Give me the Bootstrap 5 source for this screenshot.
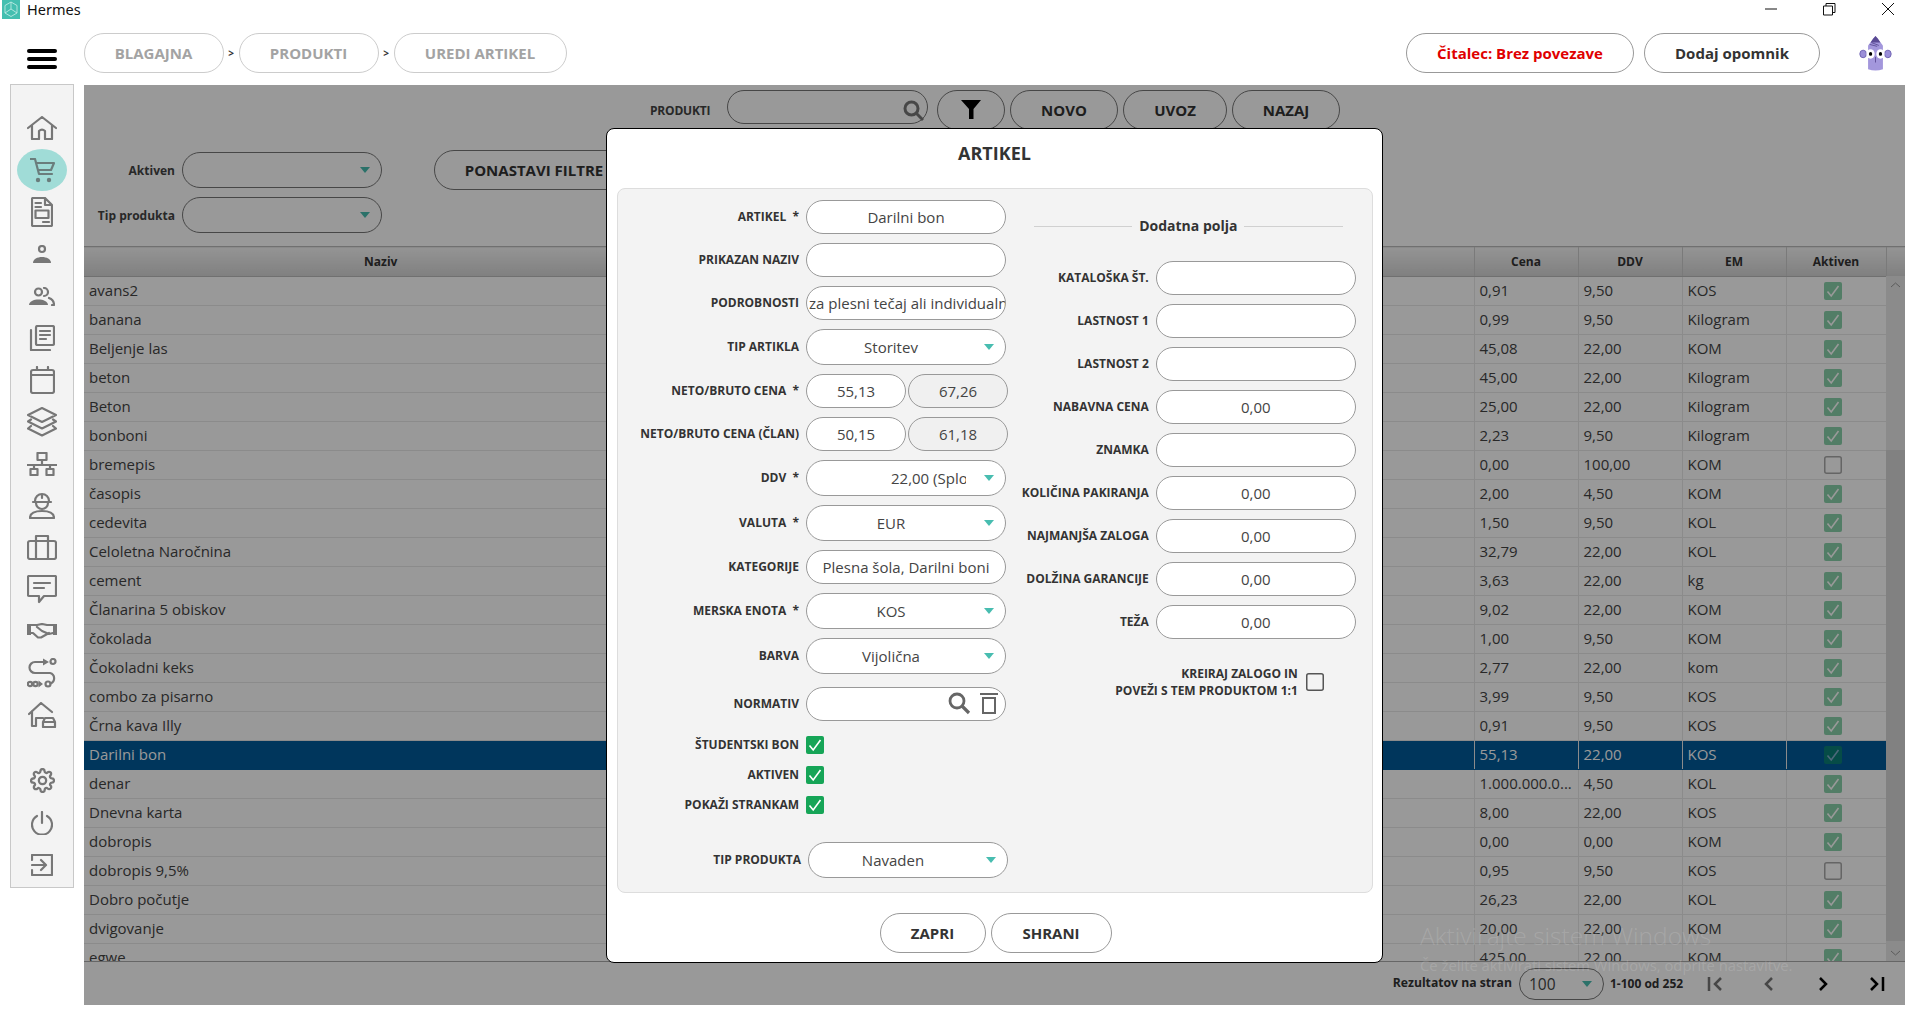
<!DOCTYPE html>
<html lang="sl">
<head>
<meta charset="utf-8">
<title>Hermes</title>
<link href="https://cdn.jsdelivr.net/npm/bootstrap@5.3.0/dist/css/bootstrap.min.css" rel="stylesheet">
<style>
html,body{height:100%;overflow:hidden;background:#fff;font-family:"Open Sans","Noto Sans",sans-serif;color:#444}
.page-sh{height:1021px;width:1919px}
.titlebar{height:33px;padding-left:2px}
.logo-box{width:18px;height:19px;margin-top:-14px}
.app-name{font-size:14.5px;color:#111;margin-left:7px;margin-top:-15px;line-height:18px;font-family:"Noto Sans","Open Sans",sans-serif}
.winctl{margin-left:auto;margin-top:-16px}
.winctl svg{width:14px;height:14px;display:block}
.winctl .w1{margin-right:44px}
.winctl .w2{margin-right:45px}
.winctl .w3{margin-right:24px}
.topbar{height:40px;margin-bottom:12px}
.burger{width:30px;margin-left:27px;margin-right:26.5px;margin-top:12px}
.burger i{display:block;height:4px;background:#000;border-radius:2px;margin-bottom:4.3px}
.pillb{height:40px;border:1px solid #999;border-radius:20px;background:#fff;font-weight:700;font-size:15px;color:#333;display:flex;align-items:center;justify-content:center;padding:0;white-space:nowrap}
.crumb{color:#a3a3a3;border-color:#ccc}
.crumb.c1{width:140px}.crumb.c2{width:140px}.crumb.c3{width:173px}
.crumb-sep{width:15px;text-align:center;font-size:10px;font-weight:700;color:#333}
.reader{width:228px;color:#e00000;margin-right:10px}
.remind{width:176px;margin-right:39px}
.avatar{width:33px;height:38px;margin-right:27px}
.workspace{height:933px}
.sidebar{width:64px;height:804px;margin-left:10px;margin-top:-1px;background:#f3f3f3;border:1px solid #c8c8c8;padding-top:22.5px}
.sideitem{height:41.9px;display:flex;align-items:center;justify-content:center;position:relative}
.sideitem svg{fill:none;stroke:#777;stroke-width:2.2;stroke-linejoin:round;stroke-linecap:round}
.sideitem svg .fl{fill:#777;stroke:none}
.sideitem.on::before{content:"";position:absolute;left:6px;right:6px;top:0;bottom:0;background:#a0dcd7;border-radius:50%}
.sideitem.on svg{position:relative;stroke:#6a7d7c}
.sideitem.on svg .fl{fill:#6a7d7c}
.sidegap{height:24px}
.mainpane{width:1821px;height:920px;margin-left:10px;position:relative;overflow:hidden;background:#fff}
.scrim{position:absolute;inset:0;background:rgba(0,0,0,.4)}
.toolrow{height:40px;margin-top:5px;padding-left:566px}
.tool-lbl{font-size:12px;font-weight:700;color:#444;width:77px;letter-spacing:-.2px;margin-top:2px}
.srch{width:201px;height:34px;border:1px solid #777;border-radius:17px;margin-right:9px;position:relative;align-self:flex-start}
.srch svg{position:absolute;right:3px;top:9px}
.toolb{background:transparent;border-color:#777;color:#333}
.t-fil{width:68px;margin-right:5px}.t-nov{width:108px;margin-right:5px}.t-uvo{width:104px;margin-right:5px}.t-naz{width:108px}
.filtrow{margin-top:20px;height:83px;padding-left:3px}
.filtlbls{width:88px;padding-top:3px;text-align:right;font-size:12px;font-weight:700;color:#444}
.filtlbls div{height:36px;line-height:36px;margin-bottom:9px}
.filtsel{margin-left:7px;width:200px;padding-top:2px}
.ghostsel{height:36px;border:1px solid #777;border-radius:18px;margin-bottom:9px;position:relative}
.ghostsel::after,.selx::after{content:"";position:absolute;right:11px;top:50%;margin-top:-3px;border-left:5px solid transparent;border-right:5px solid transparent;border-top:6px solid #48bdb0}
.rst{width:200px;margin-left:52px;background:transparent;border-color:#777;color:#333}
.gridwrap{margin-top:13px;height:715px;overflow:hidden;position:relative}
table.gridt{table-layout:fixed;width:1821px;margin:0;font-size:15px;color:#444}
table.gridt>thead>tr>th{height:30px;padding:0;text-align:center;font-size:12px;font-weight:700;color:#333;background:linear-gradient(#f7f7f7,#d5d5d5);border-top:1px solid #bbb;border-bottom:1px solid #bbb;border-left:1px solid #ccc;vertical-align:middle;box-shadow:none}
table.gridt>tbody>tr>td{height:29px;padding:0 0 2px 5px;border-bottom:1px solid #e8e8e8;border-left:1px solid #e8e8e8;background:#fff;color:#444;vertical-align:middle;white-space:nowrap;overflow:hidden;box-shadow:none;line-height:26px}
table.gridt>tbody>tr>td:first-child,table.gridt>tbody>tr>td:nth-child(2){border-left:0}
table.gridt>thead>tr>th:first-child{border-left:0}
table.gridt>tbody>tr.picked>td{background:#005a99;color:#fff;border-bottom-color:#005a99}
.ckc{text-align:center;padding:0 6px 0 0!important;line-height:0!important}
.ckt{width:18px;height:18px;opacity:.5;vertical-align:middle}
.vscroll{position:absolute;right:0;top:30px;bottom:0;width:19px;background:#e8e8e8;display:flex;flex-direction:column;align-items:center;justify-content:space-between;padding:6px 0 5px}
.vthumb{position:absolute;left:0;right:0;top:174px;bottom:20px;background:#d8d8d8}
.vscroll svg{position:relative}
.pager{height:44px;border-top:1px solid #aaa;padding-right:20px;font-size:12.2px;font-weight:700;color:#333}
.pg-lbl{margin-right:7px}
.pg-sel{width:85px;height:32px;border:1px solid #777;border-radius:16px;position:relative;font-size:15.5px;font-weight:400;padding-left:9px;line-height:30px;color:#444;margin-right:6px}
.pg-info{width:97px;font-size:12px}
.pg-nav{width:16px;margin-right:38px;display:flex;justify-content:center}
.pg-nav:last-child{margin-right:0}
.dlg.modal-content{position:absolute;left:522px;top:43px;width:777px;height:835px;border:1px solid #000;border-radius:8px;background:#fff;display:flex;flex-direction:column}
.dlg-title{height:59px;display:flex;align-items:center;justify-content:center;font-weight:700;font-size:18px;color:#333;padding-bottom:10px}
.dlg-panel{margin:0 9px 0 10px;height:705px;background:#f3f3f3;border:1px solid #ddd;border-radius:8px;padding-top:11px}
.lcol{width:391px}
.rcol{width:342px;margin-left:10.8px}
.frow{display:flex;align-items:center;margin-bottom:9px}
.flbl{width:181px;margin-right:7px;text-align:right;font-size:12px;font-weight:700;color:#333;white-space:nowrap;flex:none}
.rcol .flbl{width:129px}
.fld.form-control{width:200px;height:34px;flex:none;border:1px solid #999;border-radius:17px;background:#fff;font-size:15px;color:#444;text-align:center;padding:0 2px;line-height:32px;white-space:nowrap;overflow:hidden;box-shadow:none}
.fld.leftx{text-align:left}
.fld.half{width:100px;margin-right:2px}
.fld.half.ro{background:#f0f0f0}
.selx{width:200px;height:36px;flex:none;border:1px solid #999;border-radius:18px;background:#fff;font-size:15px;color:#444;position:relative;text-align:center;line-height:34px;padding-right:30px;white-space:nowrap}
.clipped{display:block;width:75px;margin-left:84px;overflow:hidden;text-align:left}
.m-a{margin-bottom:13px}.m-b{margin-bottom:15px}
.ckb{width:18px;height:18px;flex:none}
.frow.ckrow{margin-bottom:12px;height:18px}
.frow.tipr{margin-top:28px}
.tipr .flbl{width:183px}
.sect{height:20px;margin:16px 0 25px 14px;width:309px;font-size:14px;font-weight:700;color:#333;display:flex;align-items:center;gap:7px;line-height:20px;white-space:nowrap}
.sect::before,.sect::after{content:"";flex:1;height:1px;background:#d0d0d0}
.krow{margin-top:26px;margin-left:0;font-size:12px;font-weight:700;color:#333;line-height:17px;text-align:right;width:304px}
.krow .ckb{margin-left:8px}
.dlg-foot{padding:20px 0 0 2px;gap:5px}
.f-z{width:106px}.f-s{width:121px}
.wmk{position:absolute;left:1336px;top:836px;color:rgba(255,255,255,.15);line-height:1.2;pointer-events:none;white-space:nowrap}
.wmk .w-a{font-size:24.5px;font-weight:300}
.wmk .w-b{font-size:14.8px;font-weight:400;margin-top:7px}
.normsv{right:7px}
.fld.half+.fld.half{margin-right:0}
.pg-arrow{right:11px;top:12px;border-left:5px solid transparent;border-right:5px solid transparent;border-top:6px solid #48bdb0}
</style>
</head>
<body>
<svg width="0" height="0" class="position-absolute">
  <symbol id="ck-on" viewBox="0 0 18 18"><rect width="18" height="18" rx="2" fill="#16a557"/><path d="M3.5 9.5 7.2 14 14.5 4" fill="none" stroke="#fff" stroke-width="1.6"/></symbol>
  <symbol id="ck-off" viewBox="0 0 18 18"><rect x=".75" y=".75" width="16.5" height="16.5" rx="2" fill="none" stroke="#555" stroke-width="1.5"/></symbol>
</svg>
<div class="page-sh d-flex flex-column">
  <div class="titlebar d-flex align-items-center">
    <svg class="logo-box" viewBox="0 0 18 19"><rect width="18" height="19" fill="#44bfb0"/><path d="M9 2 15 5.500V13L9 16.500 3 13V5.500ZM9 2V9L3 13M9 9 15 13" fill="none" stroke="#c9efe9" stroke-width=".8"/></svg>
    <span class="app-name">Hermes</span>
    <div class="winctl d-flex">
      <svg class="w1" viewBox="0 0 14 14"><path d="M1 7H13" stroke="#111"/></svg>
      <svg class="w2" viewBox="0 0 14 14"><path d="M1.500 4H10.500V13H1.500ZM4 4V1.500H13V10.500H10.500" fill="none" stroke="#111"/></svg>
      <svg class="w3" viewBox="0 0 14 14"><path d="M1 1 13 13M13 1 1 13" stroke="#111"/></svg>
    </div>
  </div>
  <div class="topbar d-flex align-items-center">
    <div class="burger"><i></i><i></i><i class="mb-0"></i></div>
    <div class="pillb crumb c1">BLAGAJNA</div><div class="crumb-sep">&gt;</div>
    <div class="pillb crumb c2">PRODUKTI</div><div class="crumb-sep">&gt;</div>
    <div class="pillb crumb c3">UREDI ARTIKEL</div>
    <div class="pillb reader ms-auto">Čitalec: Brez povezave</div>
    <div class="pillb remind">Dodaj opomnik</div>
    <svg class="avatar" viewBox="0 0 40 40" preserveAspectRatio="none">
      <path d="M11 12 20 2 29 12V37Q20 40 11 37Z" fill="#a397dc"/><path d="M17 5 20 2 23 5 26 9H14Z" fill="#5a4a94"/>
      <circle cx="5" cy="21" r="4" fill="#9b8fd8" stroke="#6b5fb0"/><circle cx="35" cy="21" r="4" fill="#9b8fd8" stroke="#6b5fb0"/>
      <circle cx="14" cy="21" r="5" fill="#fff"/><circle cx="26" cy="21" r="5" fill="#fff"/>
      <circle cx="14" cy="21" r="2" fill="#000"/><circle cx="26" cy="21" r="2" fill="#000"/>
      <path d="M20 24V30M13 11 22 13M15 9 24 12" stroke="#5a4a94" fill="none"/>
    </svg>
  </div>
  <div class="workspace d-flex">
    <nav class="sidebar flex-none">
      <div class="sideitem"><svg width="30" height="24" viewBox="0 0 30 24"><path d="M1 12 15 1 29 12M5 9V23H12V15Q15 12 18 15V23H25V9"/></svg></div>
      <div class="sideitem on"><svg width="25" height="25" viewBox="0 0 25 25"><path d="M.5 1H5L9 16H22M6 5H24L21 12H8"/><circle class="fl" cx="8" cy="22" r="2.200"/><circle class="fl" cx="19" cy="22" r="2.200"/></svg></div>
      <div class="sideitem"><svg width="22" height="30" viewBox="0 0 22 30"><path d="M2 1H14L21 8V28A1 1 0 0 1 20 29H2A1 1 0 0 1 1 28V2A1 1 0 0 1 2 1ZM14 1V8H21M4.500 6H10M4.500 10H10M12 25H18"/><rect x="4.500" y="13.500" width="13" height="7.500"/></svg></div>
      <div class="sideitem"><svg width="18" height="19" viewBox="0 0 18 19"><circle cx="9" cy="4" r="3"/><path class="fl" d="M0 18C0 10 18 10 18 18Z"/></svg></div>
      <div class="sideitem"><svg width="26" height="19" viewBox="0 0 26 19"><circle cx="9.500" cy="5" r="3.500"/><path class="fl" d="M0 18C0 10.500 19 10.500 19 18Z"/><path d="M15 1A4 4 0 0 1 15 9M20 11C23 12 25 14 25 18H23"/></svg></div>
      <div class="sideitem"><svg width="26" height="26" viewBox="0 0 26 26"><rect x="7" y="1" width="18" height="19" rx="1.500"/><path d="M11 6H21M11 10H21M11 14H17M2 5V25H21"/></svg></div>
      <div class="sideitem"><svg width="25" height="28" viewBox="0 0 25 28"><rect x="1" y="4" width="23" height="23" rx="2"/><path d="M7 1V4M18 1V4M1 9H24"/></svg></div>
      <div class="sideitem"><svg width="30" height="30" viewBox="0 0 30 30"><path d="M15 1 29 8 15 15 1 8ZM4 12.500 1 14.500 15 21.500 29 14.500 26 12.500M4 19 1 21.500 15 28.500 29 21.500 26 19"/></svg></div>
      <div class="sideitem"><svg width="30" height="24" viewBox="0 0 30 24"><rect x="10.500" y="1" width="9" height="7"/><path d="M15 8V13M0 13H30M7 13V17M23 13V17"/><rect x="3.500" y="17" width="7" height="6"/><rect x="19.500" y="17" width="7" height="6"/></svg></div>
      <div class="sideitem"><svg width="26" height="28" viewBox="0 0 26 28"><path d="M6 10A7 7 0 0 1 20 10M4 11H22M7 12A6 6 0 0 0 19 12M13 3V7M1 27C1 22 6 20 13 20S25 22 25 27Z"/></svg></div>
      <div class="sideitem"><svg width="30" height="26" viewBox="0 0 30 26"><rect x="1" y="7" width="28" height="18" rx="2"/><path d="M9 7V2H21V7M9 7V25M21 7V25"/></svg></div>
      <div class="sideitem"><svg width="30" height="29" viewBox="0 0 30 29"><path d="M2 1H28A1 1 0 0 1 29 2V20A1 1 0 0 1 28 21H17L12 27V21H2A1 1 0 0 1 1 20V2A1 1 0 0 1 2 1ZM7 8H23M7 13H17"/></svg></div>
      <div class="sideitem"><svg width="30" height="16" viewBox="0 0 30 16"><rect class="fl" y="1" width="4" height="11"/><rect class="fl" x="26" y="1" width="4" height="11"/><path d="M4 2H10L15 1 20 2H26M4 10H6L11 14.500H14L22 10M10 4 15 8 22 11 26 10"/></svg></div>
      <div class="sideitem"><svg width="30" height="30" viewBox="0 0 30 30"><path d="M17 4H8A5.500 5.500 0 0 0 8 15H23A5.500 5.500 0 0 1 23.500 25.500"/><path class="fl" d="M16 .5 22 4 16 7.500ZM11.500 22.500 16 26 11.500 29.500Z"/><circle cx="26" cy="3.500" r="2.500"/><circle cx="3" cy="26" r="2.200"/><circle cx="8.500" cy="26" r="2.200"/><circle cx="21" cy="26" r="2.500"/></svg></div>
      <div class="sideitem"><svg width="29" height="26" viewBox="0 0 29 26"><path d="M1 12 13 1 24 10M4 9V24H8V16H15M15 25V20L17 16H25L27 20V25ZM15 20H27"/></svg></div>
      <div class="sidegap"></div>
      <div class="sideitem"><svg width="25" height="25" viewBox="0 0 24 24"><circle cx="12" cy="12" r="3.500"/><path d="M19.400 15a1.650 1.650 0 0 0 .33 1.820l.06.06a2 2 0 0 1 0 2.830 2 2 0 0 1-2.830 0l-.06-.06a1.650 1.650 0 0 0-1.820-.33 1.650 1.650 0 0 0-1 1.510V21a2 2 0 0 1-2 2 2 2 0 0 1-2-2v-.09A1.650 1.650 0 0 0 9 19.400a1.650 1.650 0 0 0-1.820.33l-.06.06a2 2 0 0 1-2.830 0 2 2 0 0 1 0-2.830l.06-.06a1.650 1.650 0 0 0 .33-1.820 1.650 1.650 0 0 0-1.510-1H3a2 2 0 0 1-2-2 2 2 0 0 1 2-2h.09A1.650 1.650 0 0 0 4.600 9a1.650 1.650 0 0 0-.33-1.820l-.06-.06a2 2 0 0 1 0-2.830 2 2 0 0 1 2.830 0l.06.06a1.650 1.650 0 0 0 1.820.33H9a1.650 1.650 0 0 0 1-1.510V3a2 2 0 0 1 2-2 2 2 0 0 1 2 2v.09a1.650 1.650 0 0 0 1 1.510 1.650 1.650 0 0 0 1.820-.33l.06-.06a2 2 0 0 1 2.830 0 2 2 0 0 1 0 2.830l-.06.06a1.650 1.650 0 0 0-.33 1.820V9a1.650 1.650 0 0 0 1.510 1H21a2 2 0 0 1 2 2 2 2 0 0 1-2 2h-.09a1.650 1.650 0 0 0-1.510 1z"/></svg></div>
      <div class="sideitem"><svg width="22" height="24" viewBox="0 0 22 24"><path d="M6 5A10 10 0 1 0 16 5M11 1V12"/></svg></div>
      <div class="sideitem"><svg width="22" height="22" viewBox="0 0 22 22"><path d="M1 6V1H21V21H1V16M1 11H14M10 6 15 11 10 16"/></svg></div>
    </nav>
    <main class="mainpane d-flex flex-column">
      <div class="toolrow d-flex align-items-center">
        <div class="tool-lbl">PRODUKTI</div>
        <div class="srch"><svg width="21" height="21" viewBox="0 0 21 21"><circle cx="8.500" cy="8.500" r="6.500" fill="none" stroke="#777" stroke-width="3"/><path d="M13.500 13.500 20 20" stroke="#777" stroke-width="3"/></svg></div>
        <button class="pillb toolb t-fil"><svg width="20" height="20" viewBox="0 0 20 20"><path d="M0 0H20L12.500 9V19H8V9Z" fill="#000"/></svg></button>
        <button class="pillb toolb t-nov">NOVO</button>
        <button class="pillb toolb t-uvo">UVOZ</button>
        <button class="pillb toolb t-naz">NAZAJ</button>
      </div>
      <div class="filtrow d-flex">
        <div class="filtlbls"><div>Aktiven</div><div>Tip produkta</div></div>
        <div class="filtsel"><div class="ghostsel"></div><div class="ghostsel"></div></div>
        <button class="pillb rst">PONASTAVI FILTRE</button>
      </div>
      <div class="gridwrap">
        <table class="table gridt">
          <colgroup><col style="width:594px"><col style="width:796px"><col style="width:104px"><col style="width:104px"><col style="width:104px"><col style="width:100px"><col style="width:19px"></colgroup>
          <thead><tr><th>Naziv</th><th></th><th>Cena</th><th>DDV</th><th>EM</th><th>Aktiven</th><th></th></tr></thead>
          <tbody>
            <tr><td>avans2</td><td></td><td>0,91</td><td>9,50</td><td>KOS</td><td class="ckc"><svg class="ckt"><use href="#ck-on"/></svg></td><td></td></tr>
            <tr><td>banana</td><td></td><td>0,99</td><td>9,50</td><td>Kilogram</td><td class="ckc"><svg class="ckt"><use href="#ck-on"/></svg></td><td></td></tr>
            <tr><td>Beljenje las</td><td></td><td>45,08</td><td>22,00</td><td>KOM</td><td class="ckc"><svg class="ckt"><use href="#ck-on"/></svg></td><td></td></tr>
            <tr><td>beton</td><td></td><td>45,00</td><td>22,00</td><td>Kilogram</td><td class="ckc"><svg class="ckt"><use href="#ck-on"/></svg></td><td></td></tr>
            <tr><td>Beton</td><td></td><td>25,00</td><td>22,00</td><td>Kilogram</td><td class="ckc"><svg class="ckt"><use href="#ck-on"/></svg></td><td></td></tr>
            <tr><td>bonboni</td><td></td><td>2,23</td><td>9,50</td><td>Kilogram</td><td class="ckc"><svg class="ckt"><use href="#ck-on"/></svg></td><td></td></tr>
            <tr><td>bremepis</td><td></td><td>0,00</td><td>100,00</td><td>KOM</td><td class="ckc"><svg class="ckt"><use href="#ck-off"/></svg></td><td></td></tr>
            <tr><td>časopis</td><td></td><td>2,00</td><td>4,50</td><td>KOM</td><td class="ckc"><svg class="ckt"><use href="#ck-on"/></svg></td><td></td></tr>
            <tr><td>cedevita</td><td></td><td>1,50</td><td>9,50</td><td>KOL</td><td class="ckc"><svg class="ckt"><use href="#ck-on"/></svg></td><td></td></tr>
            <tr><td>Celoletna Naročnina</td><td></td><td>32,79</td><td>22,00</td><td>KOL</td><td class="ckc"><svg class="ckt"><use href="#ck-on"/></svg></td><td></td></tr>
            <tr><td>cement</td><td></td><td>3,63</td><td>22,00</td><td>kg</td><td class="ckc"><svg class="ckt"><use href="#ck-on"/></svg></td><td></td></tr>
            <tr><td>Članarina 5 obiskov</td><td></td><td>9,02</td><td>22,00</td><td>KOM</td><td class="ckc"><svg class="ckt"><use href="#ck-on"/></svg></td><td></td></tr>
            <tr><td>čokolada</td><td></td><td>1,00</td><td>9,50</td><td>KOM</td><td class="ckc"><svg class="ckt"><use href="#ck-on"/></svg></td><td></td></tr>
            <tr><td>Čokoladni keks</td><td></td><td>2,77</td><td>22,00</td><td>kom</td><td class="ckc"><svg class="ckt"><use href="#ck-on"/></svg></td><td></td></tr>
            <tr><td>combo za pisarno</td><td></td><td>3,99</td><td>9,50</td><td>KOS</td><td class="ckc"><svg class="ckt"><use href="#ck-on"/></svg></td><td></td></tr>
            <tr><td>Črna kava Illy</td><td></td><td>0,91</td><td>9,50</td><td>KOS</td><td class="ckc"><svg class="ckt"><use href="#ck-on"/></svg></td><td></td></tr>
            <tr class="picked"><td>Darilni bon</td><td></td><td>55,13</td><td>22,00</td><td>KOS</td><td class="ckc"><svg class="ckt"><use href="#ck-on"/></svg></td><td></td></tr>
            <tr><td>denar</td><td></td><td>1.000.000.0...</td><td>4,50</td><td>KOL</td><td class="ckc"><svg class="ckt"><use href="#ck-on"/></svg></td><td></td></tr>
            <tr><td>Dnevna karta</td><td></td><td>8,00</td><td>22,00</td><td>KOS</td><td class="ckc"><svg class="ckt"><use href="#ck-on"/></svg></td><td></td></tr>
            <tr><td>dobropis</td><td></td><td>0,00</td><td>0,00</td><td>KOM</td><td class="ckc"><svg class="ckt"><use href="#ck-on"/></svg></td><td></td></tr>
            <tr><td>dobropis 9,5%</td><td></td><td>0,95</td><td>9,50</td><td>KOS</td><td class="ckc"><svg class="ckt"><use href="#ck-off"/></svg></td><td></td></tr>
            <tr><td>Dobro počutje</td><td></td><td>26,23</td><td>22,00</td><td>KOL</td><td class="ckc"><svg class="ckt"><use href="#ck-on"/></svg></td><td></td></tr>
            <tr><td>dvigovanje</td><td></td><td>20,00</td><td>22,00</td><td>KOM</td><td class="ckc"><svg class="ckt"><use href="#ck-on"/></svg></td><td></td></tr>
            <tr><td>egwe</td><td></td><td>425,00</td><td>22,00</td><td>KOM</td><td class="ckc"><svg class="ckt"><use href="#ck-on"/></svg></td><td></td></tr>
          </tbody>
        </table>
        <div class="vscroll">
          <div class="vthumb"></div>
          <svg width="11" height="6" viewBox="0 0 11 6"><path d="M1 5 5.500 1 10 5" fill="none" stroke="#999"/></svg>
          <svg width="11" height="6" viewBox="0 0 11 6"><path d="M1 1 5.500 5 10 1" fill="none" stroke="#999"/></svg>
        </div>
      </div>
      <div class="pager d-flex align-items-center justify-content-end">
        <span class="pg-lbl">Rezultatov na stran</span>
        <div class="pg-sel">100<span class="position-absolute pg-arrow"></span></div>
        <span class="pg-info">1-100 od 252</span>
        <div class="pg-nav"><svg width="16" height="14" viewBox="0 0 16 14"><path d="M2 0V14M14 1 8 7 14 13" fill="none" stroke="#777" stroke-width="2.500"/></svg></div>
        <div class="pg-nav"><svg width="10" height="14" viewBox="0 0 10 14"><path d="M8 1 2 7 8 13" fill="none" stroke="#777" stroke-width="2.500"/></svg></div>
        <div class="pg-nav"><svg width="10" height="14" viewBox="0 0 10 14"><path d="M2 1 8 7 2 13" fill="none" stroke="#000" stroke-width="2.500"/></svg></div>
        <div class="pg-nav"><svg width="16" height="14" viewBox="0 0 16 14"><path d="M14 0V14M2 1 8 7 2 13" fill="none" stroke="#000" stroke-width="2.500"/></svg></div>
      </div>
      <div class="scrim"></div>
      <section class="modal-content dlg">
        <div class="dlg-title">ARTIKEL</div>
        <div class="dlg-panel d-flex">
          <div class="lcol">
            <div class="frow"><div class="flbl">ARTIKEL&nbsp; *</div><div class="form-control fld">Darilni bon</div></div>
            <div class="frow"><div class="flbl">PRIKAZAN NAZIV</div><div class="form-control fld"></div></div>
            <div class="frow"><div class="flbl">PODROBNOSTI</div><div class="form-control fld leftx">za plesni tečaj ali individualni</div></div>
            <div class="frow"><div class="flbl">TIP ARTIKLA</div><div class="selx">Storitev</div></div>
            <div class="frow"><div class="flbl">NETO/BRUTO CENA&nbsp; *</div><div class="form-control fld half">55,13</div><div class="form-control fld half ro">67,26</div></div>
            <div class="frow"><div class="flbl">NETO/BRUTO CENA (ČLAN)</div><div class="form-control fld half">50,15</div><div class="form-control fld half ro">61,18</div></div>
            <div class="frow"><div class="flbl">DDV&nbsp; *</div><div class="selx"><span class="clipped">22,00 (Splošna)</span></div></div>
            <div class="frow"><div class="flbl">VALUTA&nbsp; *</div><div class="selx">EUR</div></div>
            <div class="frow"><div class="flbl">KATEGORIJE</div><div class="form-control fld">Plesna šola, Darilni boni</div></div>
            <div class="frow"><div class="flbl">MERSKA ENOTA&nbsp; *</div><div class="selx">KOS</div></div>
            <div class="frow m-a"><div class="flbl">BARVA</div><div class="selx">Vijolična</div></div>
            <div class="frow m-b"><div class="flbl">NORMATIV</div><div class="form-control fld position-relative"><svg class="position-absolute top-0 normsv" width="50" height="32" viewBox="0 0 50 32"><circle cx="9" cy="13" r="7" fill="none" stroke="#666" stroke-width="2.800"/><path d="M14 18 21 25" stroke="#666" stroke-width="3.200"/><path d="M32 6H50M35 10H47V25H35Z" fill="none" stroke="#666" stroke-width="2"/></svg></div></div>
            <div class="frow ckrow"><div class="flbl">ŠTUDENTSKI BON</div><svg class="ckb"><use href="#ck-on"/></svg></div>
            <div class="frow ckrow"><div class="flbl">AKTIVEN</div><svg class="ckb"><use href="#ck-on"/></svg></div>
            <div class="frow ckrow mb-0"><div class="flbl">POKAŽI STRANKAM</div><svg class="ckb"><use href="#ck-on"/></svg></div>
            <div class="frow tipr"><div class="flbl">TIP PRODUKTA</div><div class="selx">Navaden</div></div>
          </div>
          <div class="rcol">
            <div class="sect">Dodatna polja</div>
            <div class="frow"><div class="flbl">KATALOŠKA ŠT.</div><div class="form-control fld"></div></div>
            <div class="frow"><div class="flbl">LASTNOST 1</div><div class="form-control fld"></div></div>
            <div class="frow"><div class="flbl">LASTNOST 2</div><div class="form-control fld"></div></div>
            <div class="frow"><div class="flbl">NABAVNA CENA</div><div class="form-control fld">0,00</div></div>
            <div class="frow"><div class="flbl">ZNAMKA</div><div class="form-control fld"></div></div>
            <div class="frow"><div class="flbl">KOLIČINA PAKIRANJA</div><div class="form-control fld">0,00</div></div>
            <div class="frow"><div class="flbl">NAJMANJŠA ZALOGA</div><div class="form-control fld">0,00</div></div>
            <div class="frow"><div class="flbl">DOLŽINA GARANCIJE</div><div class="form-control fld">0,00</div></div>
            <div class="frow mb-0"><div class="flbl">TEŽA</div><div class="form-control fld">0,00</div></div>
            <div class="krow d-flex align-items-center justify-content-end"><div>KREIRAJ ZALOGO IN<br>POVEŽI S TEM PRODUKTOM 1:1</div><svg class="ckb"><use href="#ck-off"/></svg></div>
          </div>
        </div>
        <div class="dlg-foot d-flex justify-content-center">
          <button class="pillb f-z">ZAPRI</button>
          <button class="pillb f-s">SHRANI</button>
        </div>
      </section>
      <div class="wmk"><div class="w-a">Aktivirajte sistem Windows</div><div class="w-b">Če želite aktivirati sistem Windows, odprite nastavitve.</div></div>
    </main>
  </div>
</div>
<script src="https://cdn.jsdelivr.net/npm/bootstrap@5.3.0/dist/js/bootstrap.bundle.min.js"></script>
</body>
</html>
